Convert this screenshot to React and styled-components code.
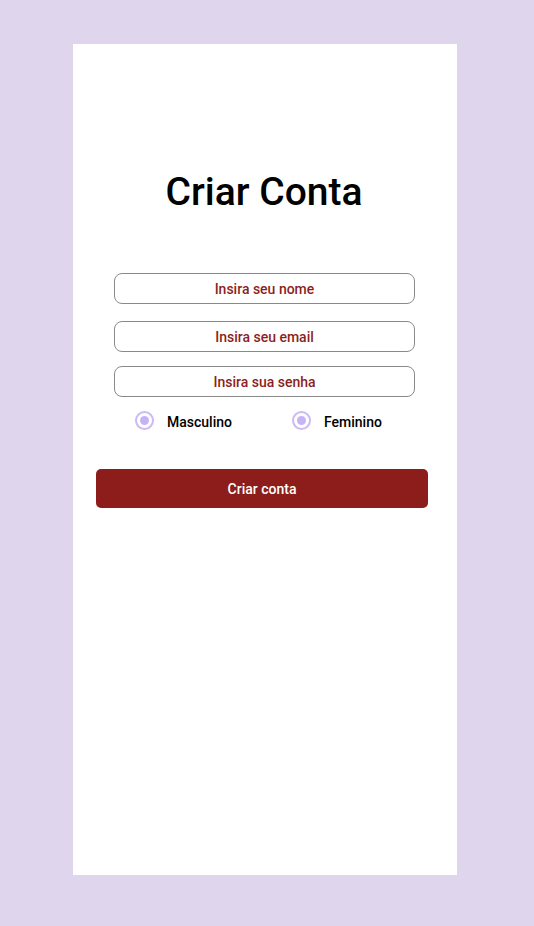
import styled, { createGlobalStyle } from "styled-components";

const GlobalStyle = createGlobalStyle`
  body {
    margin: 0;
    background: #dfd5ed;
    font-family: Roboto, "Liberation Sans", sans-serif;
  }
`;

const App = () => {
  return (
    <>
      <GlobalStyle />
      <Page>
        <Panel>
          <Title>Criar Conta</Title>
          <Fields>
            <Input placeholder="Insira seu nome" />
            <Input placeholder="Insira seu email" $top="17px" />
            <Input placeholder="Insira sua senha" type="password" $top="14px" />
          </Fields>
          <RadioRow>
            <RadioItem>
              <Radio />
              <span>Masculino</span>
            </RadioItem>
            <RadioItem>
              <Radio />
              <span>Feminino</span>
            </RadioItem>
          </RadioRow>
          <Button>Criar conta</Button>
        </Panel>
      </Page>
    </>
  );
};

export default App;

const Page = styled.div`
  width: 534px;
  height: 926px;
  padding: 44px 0 0 73px;
  box-sizing: border-box;
`;

const Panel = styled.div`
  width: 384px;
  height: 831px;
  background: #ffffff;
  padding-top: 126px;
  box-sizing: border-box;
  display: flex;
  flex-direction: column;
`;

const Title = styled.h1`
  margin: 0;
  font-size: 39px;
  line-height: 44px;
  font-weight: 500;
  text-align: center;
  color: #000;
  padding-right: 2px;
`;

const Fields = styled.div`
  margin: 59px 0 0 41px;
  width: 301px;
  display: flex;
  flex-direction: column;
`;

const Input = styled.input`
  margin-top: ${p => p.$top || "0"};
  height: 31px;
  box-sizing: border-box;
  border: 1px solid #8a8a8a;
  border-radius: 8px;
  background: #fff;
  text-align: center;
  font-family: Roboto, "Liberation Sans", sans-serif;
  font-size: 14px;
  font-weight: 500;
  color: #8c1f1d;
  outline: none;
  &::placeholder {
    color: #8c1f1d;
    opacity: 1;
  }
`;

const RadioRow = styled.div`
  margin: 13px 0 0 62px;
  display: flex;
  height: 21px;
`;

const RadioItem = styled.label`
  width: 157px;
  display: flex;
  align-items: center;
  gap: 13px;
  font-size: 14px;
  font-weight: 500;
  color: #000;
  span:last-child {
    padding-top: 2px;
  }
`;

const Radio = styled.span`
  width: 19px;
  height: 19px;
  box-sizing: border-box;
  border-radius: 50%;
  border: 2px solid #cbbaf7;
  display: flex;
  align-items: center;
  justify-content: center;
  &::after {
    content: "";
    width: 9px;
    height: 9px;
    border-radius: 50%;
    background: #c6b3f6;
  }
`;

const Button = styled.button`
  margin: 38px 0 0 23px;
  width: 332px;
  height: 39px;
  border: none;
  border-radius: 5px;
  background: #8d1d1a;
  color: #fff;
  font-family: Roboto, "Liberation Sans", sans-serif;
  font-size: 14px;
  font-weight: 500;
  cursor: pointer;
`;
